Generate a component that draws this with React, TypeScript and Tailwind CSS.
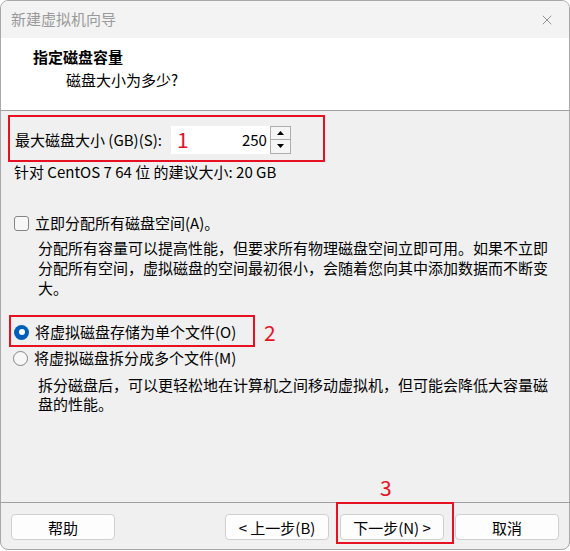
import { X } from "lucide-react";

const FONT = "font-['Noto_Sans_CJK_SC','Noto_Sans',sans-serif]";

function Btn({ children }: { children: React.ReactNode }) {
  return (
    <button className="w-[104px] h-[26px] bg-[#fdfdfd] border border-[#d0d0d0] rounded-[4px] text-[15px] leading-none text-black flex items-center justify-center">
      {children}
    </button>
  );
}

function Radio({ checked }: { checked?: boolean }) {
  if (checked) {
    return (
      <span className="w-[15px] h-[15px] rounded-full bg-[#005fb8] flex items-center justify-center shrink-0">
        <span className="w-[6px] h-[6px] rounded-full bg-white" />
      </span>
    );
  }
  return <span className="w-[15px] h-[15px] rounded-full border border-[#858585] bg-[#f7f7f7] shrink-0" />;
}

export default function App() {
  return (
    <div className={`w-[570px] h-[551px] bg-white ${FONT}`}>
      <div className="w-[570px] h-[550px] border border-[#a8a8a8] rounded-[8px] overflow-hidden flex flex-col bg-[#f0f0f0]">
        {/* title bar */}
        <div className="h-[37px] bg-[#f3f3f3] flex items-center justify-between pl-[10px] pr-[14px]">
          <span className="text-[15px] text-[#9a9a9a]">新建虚拟机向导</span>
          <X size={16} strokeWidth={1.2} className="text-[#777]" />
        </div>

        {/* header */}
        <div className="h-[73px] bg-white border-b border-[#a0a0a0] pt-[9px]">
          <div className="pl-[32px] text-[15px] leading-[20px] font-bold text-black">指定磁盘容量</div>
          <div className="pl-[65px] mt-[3px] text-[15px] leading-[20px] text-black">磁盘大小为多少?</div>
        </div>

        {/* content */}
        <div className="flex-1 flex flex-col text-[15px] leading-[20px] text-black">
          <div className="mt-[4px] ml-[7px] w-[317px] h-[47px] border-2 border-[#e81123] flex items-center pl-[5px] pt-[2px]">
            <span>最大磁盘大小 (GB)(S):</span>
            <div className="ml-[9px] flex">
              <div className="w-[99px] h-[28px] bg-white flex items-center justify-between pl-[6px] pr-[3px]">
                <span className="text-[21px] leading-none text-[#e81123]">1</span>
                <span>250</span>
              </div>
              <div className="w-[21px] h-[28px] flex flex-col border border-[#adadad] bg-[#f5f5f5]">
                <div className="flex-1 flex items-center justify-center border-b border-[#adadad]">
                  <svg width="7" height="4" viewBox="0 0 7 4"><path d="M3.5 0L7 4H0z" fill="#000" /></svg>
                </div>
                <div className="flex-1 flex items-center justify-center">
                  <svg width="7" height="4" viewBox="0 0 7 4"><path d="M0 0h7L3.5 4z" fill="#000" /></svg>
                </div>
              </div>
            </div>
          </div>

          <div className="pl-[13px]">针对 CentOS 7 64 位 的建议大小: 20 GB</div>

          <div className="mt-[31px] pl-[13px] flex items-center gap-[6px]">
            <span className="w-[15px] h-[15px] rounded-[3px] border border-[#858585] bg-[#f7f7f7] shrink-0" />
            <span>立即分配所有磁盘空间(A)。</span>
          </div>
          <p className="mt-[5px] ml-[37px] w-[516px]">
            分配所有容量可以提高性能，但要求所有物理磁盘空间立即可用。如果不立即分配所有空间，虚拟磁盘的空间最初很小，会随着您向其中添加数据而不断变大。
          </p>

          <div className="mt-[17px] flex items-center">
            <div className="ml-[8px] w-[246px] h-[32px] border-2 border-[#e81123] flex items-center gap-[6px] pl-[3px] pt-[2px]">
              <Radio checked />
              <span>将虚拟磁盘存储为单个文件(O)</span>
            </div>
            <span className="ml-[9px] text-[21px] leading-none text-[#e81123] pt-[2px]">2</span>
          </div>

          <div className="mt-[1px] pl-[12px] flex items-center gap-[6px]">
            <Radio />
            <span>将虚拟磁盘拆分成多个文件(M)</span>
          </div>
          <p className="mt-[7px] ml-[37px] w-[516px] leading-[19px]">
            拆分磁盘后，可以更轻松地在计算机之间移动虚拟机，但可能会降低大容量磁盘的性能。
          </p>
        </div>

        {/* footer */}
        <div className="relative h-[47px] border-t border-[#a0a0a0] flex items-start pt-[11px] pl-[10px] pr-[10px]">
          <Btn>帮助</Btn>
          <div className="ml-auto flex gap-[11px]">
            <div className="flex gap-[11px]">
              <Btn>&lt; 上一步(B)</Btn>
              <Btn>下一步(N) &gt;</Btn>
            </div>
            <Btn>取消</Btn>
          </div>
          <div className="absolute left-[335px] top-[-1px] w-[118px] h-[42px] border-2 border-[#e81123]" />
          <span className="absolute left-[379px] top-[-26px] text-[21px] leading-none text-[#e81123]">3</span>
        </div>
      </div>
    </div>
  );
}
